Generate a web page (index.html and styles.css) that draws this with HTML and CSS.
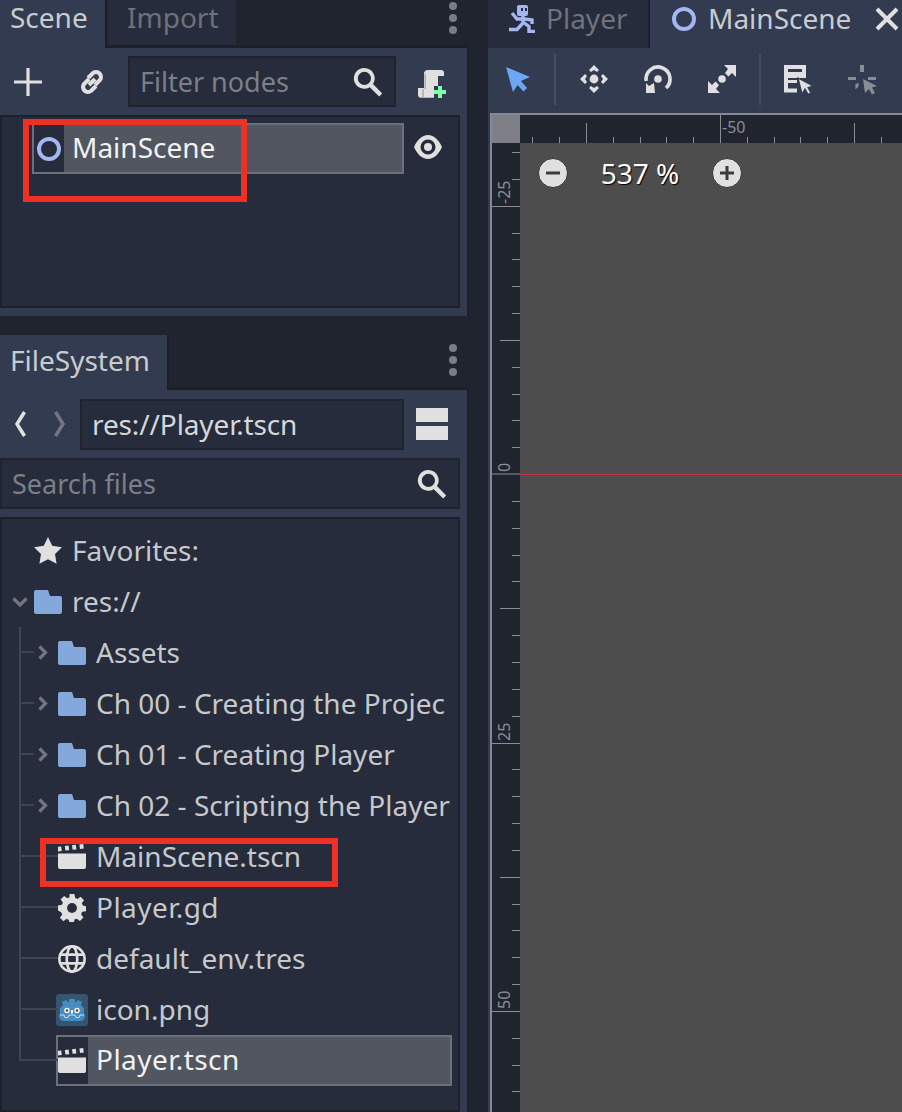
FILE: index.html
```html
<!DOCTYPE html>
<html lang="en">
<head>
<meta charset="utf-8">
<title>Godot editor</title>
<link rel="stylesheet" href="styles.css">
</head>
<body>
<svg class="defs" width="0" height="0" aria-hidden="true">
  <defs>
    <symbol id="folder" viewBox="0 0 14 12"><path d="M1 0h6l1 3h5a1 1 0 0 1 1 1v7a1 1 0 0 1-1 1H1a1 1 0 0 1-1-1V1a1 1 0 0 1 1-1z" fill="#84a8dc"/></symbol>
    <symbol id="chev" viewBox="0 0 10 15"><path d="M1.500 1.500 7.500 7.500 1.500 13.500" fill="none" stroke="#73767f" stroke-width="3.200"/></symbol>
    <symbol id="clapper" viewBox="0 0 14 13"><path d="M0 4.700h14v6.800a1 1 0 0 1-1 1H1a1 1 0 0 1-1-1zM0 1.400l1.600-.2.300 2.300-1.900.2zM3.400 1l1.900-.2.300 2.300-1.900.2zM7 .6 8.900.4l.3 2.300-1.900.2zM10.700.2 12.600 0l.3 2.300-1.900.2z" fill="#e0e0e0"/></symbol>
    <symbol id="search" viewBox="0 0 16 16"><path fill-rule="evenodd" d="M6.200 1a5.200 5.200 0 1 0 2.700 9.600l4.700 4.600 1.500-1.500-4.600-4.700A5.200 5.200 0 0 0 6.200 1zm0 1.900a3.300 3.300 0 1 1 0 6.600 3.300 3.300 0 0 1 0-6.600z" fill="#e0e0e0"/></symbol>
    <symbol id="dots" viewBox="0 0 8 32"><circle cx="4" cy="4" r="4"/><circle cx="4" cy="16" r="4"/><circle cx="4" cy="28" r="4"/></symbol>
  </defs>
</svg>
<div class="app">
  <aside class="left">
    <section class="dock dock-scene">
      <div class="tabbar tabbar-scene">
        <div class="tab tab-active tab-scene">Scene</div>
        <div class="tab tab-idle">Import</div>
        <svg class="dots" width="8" height="32"><use href="#dots"/></svg>
      </div>
      <div class="panel panel-scene">
        <div class="toolbar">
          <svg class="icon32 add" viewBox="0 0 16 16"><path d="M7.200 1h1.600v6.200H15v1.600H8.800V15H7.200V8.800H1V7.200h6.200z" fill="#e0e0e0"/></svg>
          <svg class="icon32 link" viewBox="0 0 16 16"><g fill="none" stroke="#e0e0e0" stroke-width="2"><path d="M6.500 6.500 4 9a2.500 2.500 0 0 0 3.500 3.500L10 10"/><path d="M9.500 9.500 12 7a2.500 2.500 0 0 0-3.500-3.500L6 6"/></g><path d="M5.800 8.800l3-3 1.400 1.400-3 3z" fill="#e0e0e0"/></svg>
          <div class="field filter"><span class="ph">Filter nodes</span><svg class="icon32 fsearch"><use href="#search"/></svg></div>
          <svg class="icon32 addscript" viewBox="0 0 16 16"><path d="M6 2h6.500A1.500 1.500 0 0 1 14 3.500V5h-3v5H9v5.900H2.500A1.500 1.500 0 0 1 1 14.400V11h3V4a2 2 0 0 1 2-2z" fill="#e0e0e0"/><path d="M4.600 4v7.500M3.500 11.500V15.500" stroke="#a8a8a8" stroke-width=".7" fill="none"/><path d="M11 10h2v2h2v2h-2v2h-2v-2H9v-2h2z" fill="#7dffa8"/></svg>
        </div>
        <div class="tree tree-scene">
          <div class="row-sel">
            <span class="iconcell"><svg class="ring" width="24" height="24" viewBox="0 0 24 24"><circle cx="12" cy="12" r="10" fill="none" stroke="#a5b7f3" stroke-width="4"/></svg></span>
            <span class="sel-label">MainScene</span>
          </div>
          <svg class="eye" width="28" height="24" viewBox="0 0 28 24"><path fill-rule="evenodd" d="M14 0C8 0 3 5 0 12c3 7 8 12 14 12s11-5 14-12C25 5 20 0 14 0zm0 4.500a7.500 7.500 0 1 1 0 15 7.500 7.500 0 0 1 0-15z" fill="#e0e0e0"/><circle cx="14" cy="12" r="4" fill="#e0e0e0"/></svg>
          <div class="mark mark-node"></div>
        </div>
      </div>
    </section>

    <section class="dock dock-fs">
      <div class="tabbar tabbar-fs">
        <div class="tab tab-active tab-fs">FileSystem</div>
        <svg class="dots" width="8" height="32"><use href="#dots"/></svg>
      </div>
      <div class="panel panel-fs">
        <div class="pathbar">
          <svg class="nav" width="14" height="28" viewBox="0 0 14 28"><path d="M11.500 2 4 14l7.500 12" fill="none" stroke="#e0e0e0" stroke-width="3.500"/></svg>
          <svg class="nav nav-next" width="14" height="28" viewBox="0 0 14 28"><path d="M2.500 2 10 14 2.500 26" fill="none" stroke="#73767f" stroke-width="3.500"/></svg>
          <div class="field path"><span class="path-text">res://Player.tscn</span></div>
          <div class="split"><i></i><i></i></div>
        </div>
        <div class="field search-files"><span class="ph">Search files</span><svg class="icon32"><use href="#search"/></svg></div>
        <div class="tree tree-fs">
          <div class="row">
            <svg class="ic star" viewBox="0 0 14 14"><path d="M7 0l2.100 4.400 4.900.7-3.500 3.400.8 4.900L7 11.100 2.700 13.400l.8-4.900L0 5.100l4.900-.7z" fill="#e0e0e0"/></svg>
            <span class="label">Favorites:</span>
          </div>
          <div class="row">
            <svg class="down" width="16" height="10" viewBox="0 0 16 10"><path d="M1.500 1.500 8 8l6.500-6.500" fill="none" stroke="#73767f" stroke-width="3.200"/></svg>
            <svg class="ic"><use href="#folder"/></svg>
            <span class="label">res://</span>
          </div>
          <div class="children">
            <div class="row child"><svg class="chev"><use href="#chev"/></svg><svg class="ic"><use href="#folder"/></svg><span class="label">Assets</span></div>
            <div class="row child"><svg class="chev"><use href="#chev"/></svg><svg class="ic"><use href="#folder"/></svg><span class="label">Ch 00 - Creating the Projec</span></div>
            <div class="row child"><svg class="chev"><use href="#chev"/></svg><svg class="ic"><use href="#folder"/></svg><span class="label">Ch 01 - Creating Player</span></div>
            <div class="row child"><svg class="chev"><use href="#chev"/></svg><svg class="ic"><use href="#folder"/></svg><span class="label">Ch 02 - Scripting the Player</span></div>
            <div class="row child file"><svg class="ic clap"><use href="#clapper"/></svg><span class="label">MainScene.tscn</span><div class="mark mark-file"></div></div>
            <div class="row child file">
              <svg class="ic gear" viewBox="0 0 16 16"><path fill-rule="evenodd" d="M6.600 0h2.800l.4 2.200 1.300.6L12.900 1.500l2 2-1.300 1.800.6 1.300 1.800.4v2.800l-2.200.4-.6 1.300 1.300 1.900-2 2-1.800-1.300-1.300.5-.4 2.400H6.600l-.4-2.200-1.300-.6-1.800 1.300-2-2 1.300-1.800-.6-1.300L0 9.400V6.600l2.200-.4.6-1.300-1.300-1.800 2-2 1.800 1.300 1.300-.6zM8 5.200a2.800 2.800 0 1 0 0 5.600 2.800 2.800 0 0 0 0-5.600z" fill="#e0e0e0"/></svg>
              <span class="label label-player">Player.gd</span>
            </div>
            <div class="row child file">
              <svg class="ic globe" viewBox="0 0 16 16"><g fill="none" stroke="#e0e0e0" stroke-width="1.500"><circle cx="8" cy="8" r="7.200"/><ellipse cx="8" cy="8" rx="3" ry="7.200"/><path d="M1 5.500h14M1 10.500h14"/></g></svg>
              <span class="label">default_env.tres</span>
            </div>
            <div class="row child file">
              <svg class="png" width="32" height="32" viewBox="0 0 32 32"><rect width="32" height="32" rx="3" fill="#355570"/><path d="M4 14l3-3-1-3 4-2 2 2h1l0-3h6l0 3h1l2-2 4 2-1 3 3 3v6l1 1c0 4-2 6-5 6H8c-3 0-5-2-5-6l1-1z" fill="#478cbf"/><path d="M4 21h4l1 2.500h3l1-2.500h6l1 2.500h3l1-2.500h4" fill="none" stroke="#cfe3f2" stroke-width="1"/><circle cx="11" cy="16.500" r="2.700" fill="#fff"/><circle cx="21" cy="16.500" r="2.700" fill="#fff"/><circle cx="11" cy="16.500" r="1.300" fill="#414042"/><circle cx="21" cy="16.500" r="1.300" fill="#414042"/><rect x="15" y="16" width="2" height="3.500" fill="#fff"/></svg>
              <span class="label">icon.png</span>
            </div>
            <div class="row child file selected">
              <div class="row-sel row-sel-file">
                <span class="iconcell iconcell-file"><svg class="ic clap"><use href="#clapper"/></svg></span>
                <span class="sel-label label-player">Player.tscn</span>
              </div>
            </div>
          </div>
        </div>
      </div>
    </section>
  </aside>

  <main class="right">
    <div class="doc-tabs">
      <div class="doc-tab doc-idle">
        <svg class="runner" width="28" height="28" viewBox="0 0 28 28"><rect x="8" y="0" width="11" height="11" rx="2" fill="#a5b7f3"/><rect x="12" y="3" width="2" height="3" fill="#262c3b"/><rect x="16" y="3" width="2" height="3" fill="#262c3b"/><g fill="none" stroke="#a5b7f3" stroke-width="3.400"><path d="M3 8l5 6h8l7 1v4"/><path d="M14 10v8L8 24.500H0"/><path d="M14 17l6 4.500v5h6"/></g></svg>
        <span class="doc-label">Player</span>
      </div>
      <div class="doc-tab doc-active">
        <svg class="ring" width="24" height="24" viewBox="0 0 24 24"><circle cx="12" cy="12" r="10" fill="none" stroke="#a5b7f3" stroke-width="4"/></svg>
        <span class="doc-label">MainScene</span>
        <svg class="close" width="24" height="24" viewBox="0 0 24 24"><path d="M2 2l20 20M22 2 2 22" stroke="#e0e0e0" stroke-width="4"/></svg>
      </div>
    </div>
    <div class="panel panel-view">
      <div class="viewbar">
        <svg class="tool tool-select" viewBox="0 0 16 16"><path d="M2 2l12 5-4.500 2 3 3.500-1.800 1.700L7.800 11 5.500 14.500z" fill="#6ba7f2"/></svg>
        <i class="vsep"></i>
        <svg class="tool" viewBox="0 0 16 16"><g fill="#e0e0e0"><circle cx="8" cy="8" r="2.200"/><path d="M8 1 5.500 3.500l1 1 1.500-1 1.500 1 1-1zM8 15l-2.500-2.500 1-1 1.500 1 1.500-1 1 1zM1 8l2.500-2.500 1 1-1 1.500 1 1.500-1 1zM15 8l-2.500-2.500-1 1 1 1.500-1 1.500 1 1z"/></g></svg>
        <svg class="tool" viewBox="0 0 16 16"><circle cx="8" cy="8" r="1.900" fill="#e0e0e0"/><path d="M12 12.500A6 6 0 1 0 2.100 9" fill="none" stroke="#e0e0e0" stroke-width="1.800"/><path d="M2 10l1.500 1.500L6 10l.5 5H2z" fill="#e0e0e0"/></svg>
        <svg class="tool" viewBox="0 0 16 16"><circle cx="8" cy="8" r="1.900" fill="#e0e0e0"/><path d="M9 1h6v6l-2-2-1.800 1.800L9.500 5 11 3zM7 15H1V9l2 2 1.800-1.800L6.500 11 5 13z" fill="#e0e0e0"/></svg>
        <i class="vsep vsep-2"></i>
        <svg class="tool tool-list" viewBox="0 0 16 16"><path d="M.5 1h11v6.500H2.500V8.500H7v1.500H2.500v2.700H7v2H.5zM2.500 3v1.500h7V3z" fill="#e0e0e0" fill-rule="evenodd"/><path d="M7.500 7.500 15 11.500l-2.500.8 1.500 2.700-1.500.7-1.500-2.700-1.500 2.500z" fill="#e0e0e0" stroke="#323b4f" stroke-width=".6"/></svg>
        <svg class="tool tool-pivot" viewBox="0 0 16 16"><g fill="#8b8d94"><path d="M6.500 1h2v3.500h-2zM.5 7h4v1.500h-4zM10.500 7h4v1.500h-4zM4.200 10.500 5.800 10v1.700l-1.600 1.500z"/><path d="M8 8l7 3.500-2.500.8 1.500 2.700-1.500.7-1.500-2.700L9 15z"/></g></svg>
      </div>
      <div class="viewport">
        <div class="corner"></div>
        <svg class="ruler-top" width="382" height="28" viewBox="520 115 382 28">
          <path d="M720.500 115v28M586.500 123v20M854.500 123v20M532.500 137v6M559.500 137v6M613.500 137v6M640.500 137v6M666.500 137v6M693.500 137v6M747.500 137v6M774.500 137v6M800.500 137v6M827.500 137v6M881.500 137v6" stroke="#8a8d96" stroke-width="1" fill="none"/>
          <text class="rtext" x="722" y="133">-50</text>
        </svg>
        <svg class="ruler-left" width="28" height="969" viewBox="492 143 28 969">
          <path d="M492 206.500h28M492 474h28M492 743.500h28M492 1011.500h28M500 340.500h20M500 608.500h20M500 877.500h20" stroke="#8a8d96" stroke-width="1.200" fill="none"/>
          <path d="M512 152.500h8M512 179.500h8M512 233.500h8M512 259.500h8M512 286.500h8M512 313.500h8M512 367.500h8M512 394.500h8M512 420.500h8M512 447.500h8M512 501.500h8M512 528.500h8M512 555.500h8M512 581.500h8M512 635.500h8M512 662.500h8M512 689.500h8M512 716.500h8M512 769.500h8M512 796.500h8M512 823.500h8M512 850.500h8M512 904.500h8M512 930.500h8M512 957.500h8M512 984.500h8M512 1038.500h8M512 1065.500h8M512 1091.500h8" stroke="#8a8d96" stroke-width="1" fill="none"/>
          <text class="rtext" transform="translate(510 204) rotate(-90)">-25</text>
          <text class="rtext" transform="translate(510 472) rotate(-90)">0</text>
          <text class="rtext" transform="translate(510 741) rotate(-90)">25</text>
          <text class="rtext" transform="translate(510 1009) rotate(-90)">50</text>
        </svg>
        <div class="canvas">
          <div class="axis"></div>
          <div class="zoom">
            <span class="zbtn"><svg width="28" height="28" viewBox="0 0 28 28"><path d="M7 12.500h14v3H7z" fill="#3c3c3c"/></svg></span>
            <span class="zval">537 %</span>
            <span class="zbtn"><svg width="28" height="28" viewBox="0 0 28 28"><path d="M12.500 7h3v5.500H21v3h-5.500V21h-3v-5.500H7v-3h5.500z" fill="#3c3c3c"/></svg></span>
          </div>
        </div>
      </div>
    </div>
  </main>
</div>
</body>
</html>
```
FILE: styles.css
```css
* { box-sizing: border-box; }
html, body { margin: 0; padding: 0; height: 100%; overflow: hidden; }
body {
  background: #20242f;
  font-family: "Noto Sans", sans-serif;
  font-size: 28px;
  color: #c6c8cc;
}
.defs { position: absolute; }
.app { display: flex; gap: 19px; height: 1112px; width: 902px; overflow: hidden; }
.left { width: 469px; flex: none; display: flex; flex-direction: column; }
.right { flex: 1; min-width: 0; display: flex; flex-direction: column; }

/* docks */
.dock { display: flex; flex-direction: column; }
.dock-fs { margin-top: 19px; flex: 1; min-height: 0; }
.tabbar { display: flex; align-items: stretch; position: relative; box-shadow: inset 0 -3px 0 #1d2029; flex: none; }
.tabbar-scene { height: 48px; }
.tabbar-fs { height: 55px; }
.tab { display: flex; align-items: center; line-height: 30px; }
.tab-active { background: #323b4f; color: #c9cbcf; padding: 0 10px; border-right: 2px solid #1d2029; position: relative; }
.tab-scene { width: 107px; padding-bottom: 14px; }
.tab-fs { width: 169px; padding-bottom: 6px; }
.tab-idle { background: #262c3b; color: #6d717b; width: 128px; margin-left: 1px; height: 45px; padding: 0 19px 12px; }
.dots { fill: #7a7d85; position: absolute; right: 12px; top: 2px; }
.tabbar-fs .dots { top: 9px; }
.panel { background: #323b4f; border-right: 2px solid #1d2029; }
.panel-scene { height: 268px; display: flex; flex-direction: column; }
.panel-fs { flex: 1; min-height: 0; display: flex; flex-direction: column; }

.toolbar { display: flex; align-items: center; padding: 8px 0 8px 12px; height: 67px; flex: none; }
.icon32 { width: 32px; height: 32px; flex: none; }
.link { margin-left: 32px; }
.field { background: #262c3b; border: 2px solid #1f2330; display: flex; align-items: center; height: 51px; }
.filter { width: 268px; margin-left: 20px; padding: 0 10px; justify-content: space-between; }
.addscript { margin-left: 20px; }
.ph { color: #7c7f87; font-size: 27px; }
.tree { background: #262c3b; border: 2px solid #1d2029; width: 460px; position: relative; }
.tree-scene { height: 193px; padding: 6px 0 0 30px; display: flex; }
.row-sel { display: flex; align-items: stretch; background: #525660; border: 2px solid #6c707c; height: 51px; width: 372px; color: #f2f2f2; }
.iconcell { background: #262c3b; width: 30px; display: flex; align-items: center; justify-content: center; flex: none; }
.sel-label { padding: 0 0 3px 8px; display: flex; align-items: center; }
.eye { margin: 12px 0 0 10px; flex: none; }

/* annotations */
.mark { position: absolute; border: 6px solid #ee3124; pointer-events: none; }
.mark-node { left: 21px; top: 2px; width: 224px; height: 83px; }
.mark-file { left: 38px; top: 7px; width: 298px; height: 49px; }

/* filesystem */
.pathbar { display: flex; align-items: center; height: 68px; flex: none; }
.nav { margin-left: 13px; flex: none; }
.nav-next { margin-left: 26px; }
.path { width: 324px; margin: 1px 0 0 13px; padding-left: 10px; color: #d6d7da; }
.path-text { letter-spacing: -0.12px; padding-bottom: 2px; }
.split { width: 32px; height: 32px; margin-left: 12px; display: flex; flex-direction: column; justify-content: space-between; }
.split i { display: block; height: 14px; background: #e0e0e0; }
.search-files { width: 460px; justify-content: space-between; padding: 0 10px; flex: none; }
.tree-fs { margin-top: 8px; flex: 1; min-height: 0; padding-top: 6px; overflow: hidden; }
.row { height: 51px; display: flex; align-items: center; position: relative; padding-left: 32px; }
.ic { width: 28px; height: 28px; flex: none; }
.label { margin-left: 10px; white-space: nowrap; padding-bottom: 2px; }
.label-player { letter-spacing: 0.45px; }
.down { position: absolute; left: 10px; top: 21px; }
.children { position: relative; }
.children::before { content: ""; position: absolute; left: 17px; top: 0; bottom: 25px; width: 2px; background: #3f4451; }
.child { padding-left: 56px; }
.child::before { content: ""; position: absolute; left: 18px; top: 24px; width: 14px; height: 2px; background: #3f4451; }
.file::before { width: 38px; }
.chev { position: absolute; left: 36px; top: 18px; width: 10px; height: 15px; }
.png { margin-left: -2px; margin-right: -2px; flex: none; }
.selected { padding-left: 54px; }
.row-sel-file { width: 396px; height: 51px; }
.iconcell-file { justify-content: flex-start; }
.clap { height: 26px; }

/* right */
.doc-tabs { display: flex; height: 48px; flex: none; }
.doc-tab { display: flex; align-items: center; padding-bottom: 10px; }
.doc-label { padding-bottom: 3px; line-height: 30px; }
.doc-idle { width: 162px; background: #262c3b; color: #6f737c; padding-left: 21px; gap: 9px; border-right: 2px solid #1d2029; }
.doc-active { flex: 1; background: #323b4f; color: #c9cbcf; padding-left: 22px; gap: 12px; }
.close { margin-left: 12px; flex: none; }
.runner { flex: none; }
.panel-view { flex: 1; min-height: 0; border: 0; padding-left: 2px; display: flex; flex-direction: column; }
.viewbar { height: 65px; display: flex; align-items: center; flex: none; padding: 0 0 3px 12px; }
.tool { width: 32px; height: 32px; flex: none; margin-right: 32px; }
.tool-select { margin-right: 0; }
.vsep { width: 2px; height: 51px; background: #454d60; margin: 0 22px 0 20px; flex: none; }
.vsep-2 { margin: 0 22px 0 -11px; }
.viewport { flex: 1; min-height: 0; display: grid; grid-template-columns: 30px 1fr; grid-template-rows: 30px 1fr; background: #20242f; }
.corner { background: #7f8087; border-left: 2px solid #868993; border-top: 2px solid #868993; }
.ruler-top, .ruler-left { display: block; background: #20242f; }
.ruler-top { border-top: 2px solid #868993; height: 30px; width: 382px; }
.ruler-left { border-left: 2px solid #868993; width: 30px; height: 969px; }
.rtext { font-family: "Noto Sans", sans-serif; font-size: 16px; fill: #8a8d96; }
.canvas { background: #4d4d4d; position: relative; overflow: hidden; }
.axis { position: absolute; left: 0; right: 0; top: 331px; height: 1px; background: #c8304a; }
.zoom { position: absolute; left: 18px; top: 15px; display: flex; align-items: center; }
.zbtn { width: 30px; height: 30px; border-radius: 50%; background: #e0e0e0; border: 1px solid #333; display: flex; align-items: center; justify-content: center; flex: none; }
.zval { width: 144px; line-height: 30px; text-align: center; color: #fff; font-size: 28px; text-shadow: 1px 1px 1px #000; }
```
